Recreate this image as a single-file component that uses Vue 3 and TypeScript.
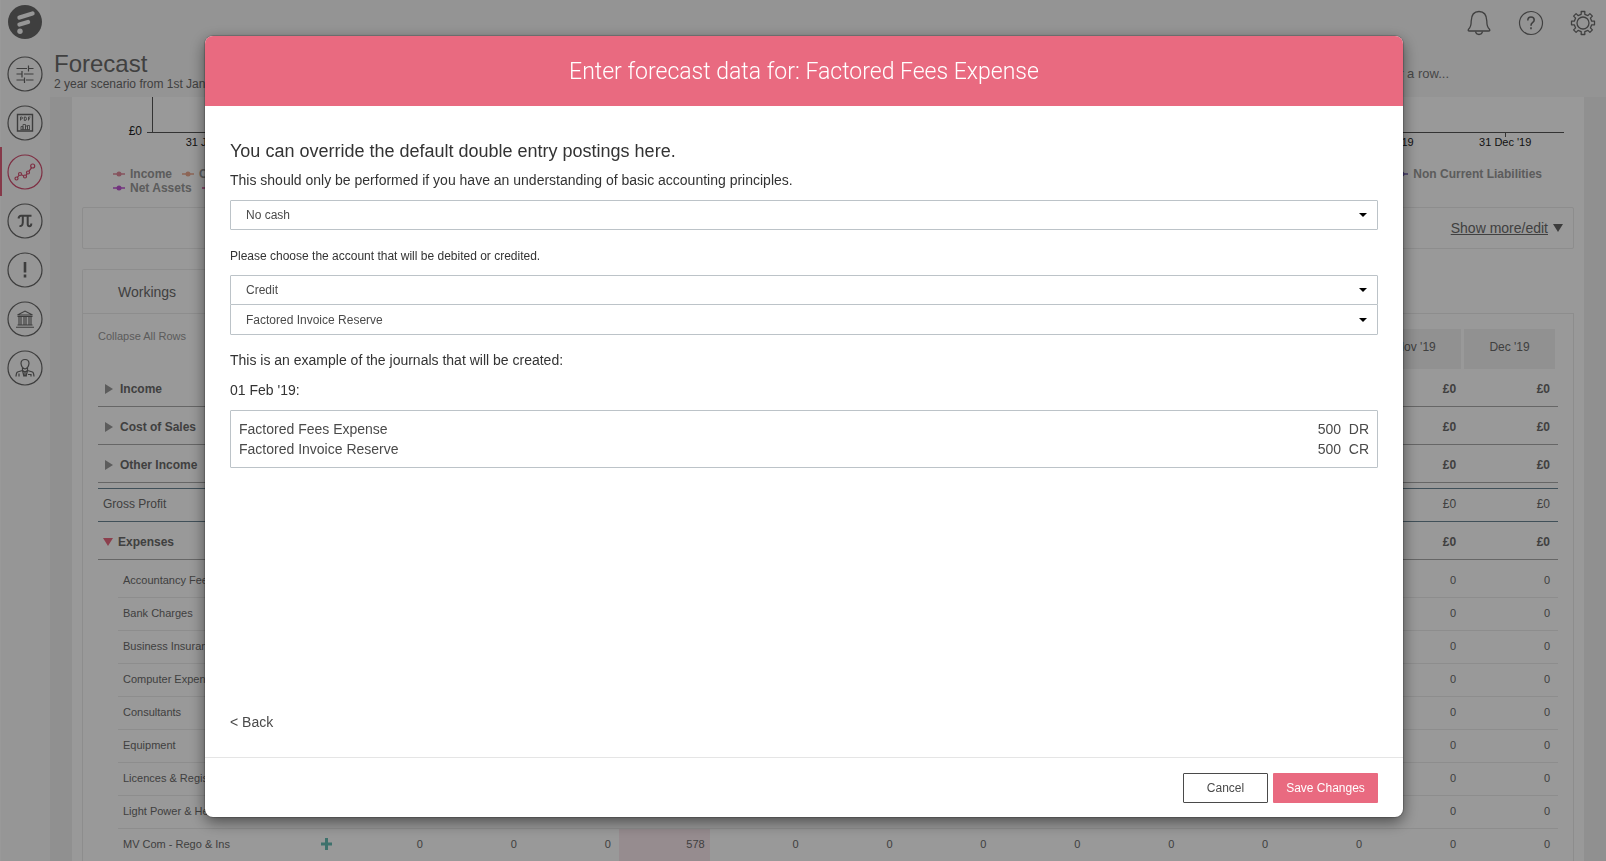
<script setup lang="ts">
import { ref } from 'vue'

interface Row {
  name: string
  kind: 'group' | 'total' | 'sub'
  open?: boolean
  first?: boolean
  add?: boolean
  values?: Record<number, string>
}

const months = ["Dec '18", "Jan '19", "Feb '19", "Mar '19", "Apr '19", "May '19", "Jun '19", "Jul '19", "Aug '19", "Sep '19", "Oct '19", "Nov '19", "Dec '19"]
const axis = ["31 Jan '19", "28 Feb '19", "31 Mar '19", "30 Apr '19", "31 May '19", "30 Jun '19", "31 Jul '19", "31 Aug '19", "30 Sep '19", "31 Oct '19", "30 Nov '19", "31 Dec '19"]
const rows: Row[] = [
  { name: 'Income', kind: 'group' },
  { name: 'Cost of Sales', kind: 'group' },
  { name: 'Other Income', kind: 'group' },
  { name: 'Gross Profit', kind: 'total' },
  { name: 'Expenses', kind: 'group', open: true },
  { name: 'Accountancy Fees', kind: 'sub', first: true },
  { name: 'Bank Charges', kind: 'sub' },
  { name: 'Business Insurance', kind: 'sub' },
  { name: 'Computer Expenses', kind: 'sub' },
  { name: 'Consultants', kind: 'sub' },
  { name: 'Equipment', kind: 'sub' },
  { name: 'Licences & Registrations', kind: 'sub' },
  { name: 'Light Power & Heat', kind: 'sub' },
  { name: 'MV Com - Rego & Ins', kind: 'sub', add: true, values: { 3: '578' } },
]
const legend = [
  [
    { name: 'Income', color: '#e08a9c' },
    { name: 'Cost of Sales', color: '#eba98f' },
    { name: 'Non Current Liabilities', color: '#7463b8' },
  ],
  [
    { name: 'Net Assets', color: '#bf55d3' },
    { name: 'Cash', color: '#d0509a' },
  ],
]
const nav = ['Scenarios', 'Reports', 'Forecast', 'Formulas', 'Alerts', 'Bank', 'Advisers']

const payment = ref('No cash')
const side = ref('Credit')
const account = ref('Factored Invoice Reserve')
const journal = [
  { name: 'Factored Fees Expense', amount: '500', side: 'DR' },
  { name: 'Factored Invoice Reserve', amount: '500', side: 'CR' },
]

function cell(row: Row, i: number): string {
  if (row.kind !== 'sub') return '£0'
  return row.values?.[i] ?? '0'
}
</script>

<template>
  <div class="app">
    <aside class="sidebar">
      <a href="#" class="logo" aria-label="Home">
        <svg width="34" height="34" viewBox="0 0 34 34">
          <circle cx="17" cy="17" r="17" fill="#6a6a6a" />
          <g stroke="#fafafa" stroke-width="4.4" stroke-linecap="round">
            <path d="M11.5 12.5 L24.5 8.5" />
            <path d="M11.5 19.5 L20 17" />
          </g>
          <circle cx="12" cy="26.3" r="2.7" fill="#fafafa" />
        </svg>
      </a>
      <nav>
        <a v-for="(item, i) in nav" :key="item" href="#" class="nav-item" :class="{ active: i === 2 }" :aria-label="item">
          <svg width="36" height="36" viewBox="0 0 36 36" fill="none" stroke="currentColor" stroke-width="1.2">
            <circle cx="18" cy="18" r="17" />
            <path v-if="i === 0" d="M9.5 12.5H20M22 12.5H26.5M21.5 9.5V15.5M9.5 18H14.5M17 18H26.5M15 15V21.5M9.5 24H17M19 24H26.5M17.5 21.5V27" stroke-width="1.2" />
            <template v-else-if="i === 1">
              <path d="M10.5 9.5H25.5V26H10.5Z" stroke-width="1.4" />
              <path d="M13.5 15.5V12H14.5Q15.5 12 15.5 13Q15.5 14 14.5 14H13.5M17.3 12V15.5H18Q19.5 15.5 19.5 13.7Q19.5 12 18 12ZM21.5 15.5V12H23.5M21.5 13.8H23" stroke-width="0.9" />
              <path d="M14 24.5V21.5H16V24.5M16 24.5V19.5H18.500V24.5M18.500 24.5V21H20.5V24.5M20.500 24.5V20.500H22.500V24.5M13.5 24.5H23" stroke-width="0.8" />
            </template>
            <g v-else-if="i === 2">
              <circle cx="9.5" cy="24.5" r="1.5" /><circle cx="13" cy="20" r="1.5" /><circle cx="18" cy="22.5" r="1.5" /><circle cx="21" cy="18.5" r="1.5" /><circle cx="25.7" cy="12" r="2" />
              <path d="M10.5 23.2L12 21.4M14.4 20.7L16.6 21.8M19 21.3L20 19.8M22 17.2L24.5 13.8" />
            </g>
            <path v-else-if="i === 3" d="M11.5 15.5Q12 12.700 14 12.700H24.5M15.800 13V19.500Q15.500 23.500 12.500 23M20.700 13V21Q20.800 23.300 22.500 23.300Q24.300 23.300 24.300 20.500" stroke-width="2" />
            <path v-else-if="i === 4" d="M18 10V20.5M18 22.500V25.5" stroke-width="2.6" />
            <path v-else-if="i === 5" d="M10.5 14L18 10L25.5 14ZM10.5 15.500H25.5M12 16V23.500M14 16V23.500M17 16V23.500M19 16V23.500M22 16V23.500M24 16V23.500M10.500 24H25.500M9 26.300H27" stroke-width="1.1" />
            <path v-else d="M14 13.500Q14 9.500 18 9.500Q22 9.500 22 13.500Q21.500 18 18 19Q14.500 18 14 13.500ZM15.500 18V20.500L18 22L20.500 20.500V18M15.500 20.500L10.500 22Q9.300 22.500 9 26.500M20.500 20.500L25.500 22Q26.700 22.500 27 26.500M12 26.500V23.500M24 26.500V24M15.500 20.500L17 26.500M20.500 20.500L19 26.500M18 22V26.500M21 24.500H24" stroke-width="1.2" />
          </svg>
        </a>
      </nav>
    </aside>

    <div class="page">
      <header class="top">
        <div class="heading">
          <h1>Forecast</h1>
          <p>2 year scenario from 1st Jan '18</p>
        </div>
        <input class="search" type="text" placeholder="Search for a row..." aria-label="Search for a row" />
        <div class="tools">
          <button type="button" aria-label="Notifications">
            <svg width="26" height="26" viewBox="0 0 26 26" fill="none" stroke="currentColor" stroke-width="1.3">
              <path d="M3.500 21Q1.500 21 2.500 19.300Q5.200 17 5.200 11Q5.500 1.500 13 1.500Q20.500 1.500 20.800 11Q20.800 17 23.500 19.300Q24.500 21 22.500 21Z" />
              <path d="M9.500 21.500Q10 24.500 13 24.500Q16 24.500 16.500 21.500" />
            </svg>
          </button>
          <button type="button" aria-label="Help">
            <svg width="26" height="26" viewBox="0 0 26 26" fill="none" stroke="currentColor" stroke-width="1.2">
              <circle cx="13" cy="13" r="11.5" />
              <path d="M9.800 10.500Q9.800 7 13 7Q16.200 7 16.200 10Q16.200 11.500 14.500 12.700Q13 13.800 13 15.800M13 17.300V19.300" stroke-width="1.6" />
            </svg>
          </button>
          <button type="button" aria-label="Settings">
            <svg width="26" height="26" viewBox="0 0 26 26" fill="none" stroke="currentColor" stroke-width="1.3" stroke-linejoin="round">
              <circle cx="13" cy="13" r="6" />
              <path d="M11.200 4.300V1.500H14.800V4.300L17.900 5.600L19.900 3.600L22.400 6.100L20.400 8.100L21.700 11.200H24.500V14.800H21.700L20.400 17.900L22.400 19.900L19.900 22.400L17.900 20.400L14.800 21.700V24.500H11.200V21.700L8.100 20.400L6.100 22.400L3.600 19.900L5.600 17.900L4.300 14.800H1.500V11.200H4.300L5.600 8.100L3.600 6.100L6.100 3.600L8.100 5.600Z" />
            </svg>
          </button>
        </div>
      </header>

      <main class="main">
        <section class="chart">
          <div class="plot"><span class="zero">£0</span><div class="area"></div></div>
          <div class="axis"><span v-for="a in axis" :key="a">{{ a }}</span></div>
          <div class="legend">
            <div v-for="(line, i) in legend" :key="i" class="legend-row">
              <span v-for="l in line" :key="l.name" class="legend-item">
                <svg width="12" height="6" viewBox="0 0 12 6"><path d="M0 3H12" :stroke="l.color" stroke-width="1.5" /><circle cx="6" cy="3" r="2.5" :fill="l.color" /></svg>{{ l.name }}
              </span>
            </div>
          </div>
        </section>

        <section class="summary">
          <a href="#">Show more/edit</a>
          <svg width="10" height="8" viewBox="0 0 10 8"><path d="M0 0H10L5 8Z" fill="#646464" /></svg>
        </section>

        <div class="tab-line"><button type="button" class="tab">Workings</button></div>
        <section class="workings">
          <table class="grid">
            <colgroup><col class="name-col" /><col v-for="m in months" :key="m" /></colgroup>
            <thead>
              <tr>
                <th class="collapse"><button type="button">Collapse All Rows</button></th>
                <th v-for="m in months" :key="m" class="month-head"><span>{{ m }}</span></th>
              </tr>
            </thead>
            <tbody v-for="row in rows" :key="row.name" :class="[row.kind, { first: row.first }]">
              <tr v-if="row.kind === 'total'" class="spacer"><td colspan="14"></td></tr>
              <tr class="line">
                <th scope="row">
                  <div class="label">
                    <svg v-if="row.kind === 'group' && !row.open" class="arrow" width="8" height="10" viewBox="0 0 8 10"><path d="M0 0L8 5L0 10Z" fill="#999" /></svg>
                    <svg v-if="row.open" width="10" height="8" viewBox="0 0 10 8"><path d="M0 0H10L5 8Z" fill="#e96a80" /></svg>
                    <span>{{ row.name }}</span>
                    <svg v-if="row.add" class="plus" width="11" height="12" viewBox="0 0 11 12"><path d="M5.500 0V12M0 6H11" stroke="#68bdb5" stroke-width="3" /></svg>
                  </div>
                </th>
                <td v-for="(m, i) in months" :key="m" :class="{ hot: row.values && row.values[i] }">{{ cell(row, i) }}</td>
              </tr>
            </tbody>
          </table>
        </section>
      </main>
    </div>

    <div class="overlay">
      <div class="modal" role="dialog" aria-modal="true" aria-labelledby="modal-title">
        <header class="modal-head"><h2 id="modal-title">Enter forecast data for: Factored Fees Expense</h2></header>
        <div class="modal-body">
          <h3>You can override the default double entry postings here.</h3>
          <p class="hint">This should only be performed if you have an understanding of basic accounting principles.</p>
          <div class="select">
            <select v-model="payment" aria-label="Cash posting"><option>No cash</option><option>Cash</option></select>
            <svg width="8" height="4" viewBox="0 0 8 4"><path d="M0 0H8L4 4Z" /></svg>
          </div>
          <p id="account-note" class="note">Please choose the account that will be debited or credited.</p>
          <div class="select">
            <select v-model="side" aria-labelledby="account-note"><option>Credit</option><option>Debit</option></select>
            <svg width="8" height="4" viewBox="0 0 8 4"><path d="M0 0H8L4 4Z" /></svg>
          </div>
          <div class="select joined">
            <select v-model="account" aria-labelledby="account-note"><option>Factored Invoice Reserve</option></select>
            <svg width="8" height="4" viewBox="0 0 8 4"><path d="M0 0H8L4 4Z" /></svg>
          </div>
          <p class="example">This is an example of the journals that will be created:</p>
          <p class="date">01 Feb '19:</p>
          <div class="journal">
            <table>
              <tbody>
                <tr v-for="j in journal" :key="j.name"><td>{{ j.name }}</td><td class="amount">{{ j.amount }}</td><td class="side">{{ j.side }}</td></tr>
              </tbody>
            </table>
          </div>
          <a href="#" class="back">&lt; Back</a>
        </div>
        <footer class="modal-foot">
          <button type="button" class="btn cancel">Cancel</button>
          <button type="button" class="btn save">Save Changes</button>
        </footer>
      </div>
    </div>
  </div>
</template>

<style>
body { margin: 0; overflow: hidden; }
</style>

<style scoped>
* { box-sizing: border-box; }
.app { display: flex; height: 100vh; overflow: hidden; font-family: "Liberation Sans", Arial, sans-serif; color: #6b6b6b; background: #fafafa; }
h1, h2, h3, p { margin: 0; font-weight: 400; }
button { font: inherit; color: inherit; background: none; border: 0; padding: 0; }
a { color: inherit; }
svg { display: block; flex: none; }

.sidebar { width: 50px; flex: none; background: #fafafa; box-shadow: inset 1px 0 #fff; }
.logo { display: block; padding: 5px 0 0 8px; height: 49px; }
.nav-item { display: flex; align-items: center; height: 49px; padding-left: 7px; color: #666; }
.nav-item.active { color: #d24e70; border-left: 2px solid #e0607a; padding-left: 5px; }

.page { flex: 1; min-width: 0; display: flex; flex-direction: column; background: #f0f0f0; }
.top { height: 97px; flex: none; display: flex; background: #f7f7f7; padding-left: 4px; }
.heading { flex: 1; padding-top: 50px; }
.heading h1 { font-size: 24px; line-height: 27px; }
.heading p { font-size: 12px; line-height: 14px; }
.search { align-self: flex-start; margin: 63px 17px 0 0; width: 200px; height: 20px; border: 0; padding: 0; background: transparent; font: 13px "Liberation Sans", Arial, sans-serif; text-align: right; }
.search::placeholder { color: #777; opacity: 1; }
.tools { display: flex; gap: 26px; padding: 10px 10px 0 0; height: 36px; }

.main { flex: none; margin: 0 22px; background: #fff; padding: 0 10px; }
.chart { height: 110px; }
.plot { display: flex; height: 36px; padding-right: 10px; }
.zero { width: 60px; padding-top: 27px; text-align: right; font-size: 12px; line-height: 14px; color: #222; }
.area { flex: 1; margin-left: 10px; border-left: 1px solid #555; border-bottom: 1px solid #555; position: relative; }
.area::before { content: ""; position: absolute; left: -6px; bottom: -1px; width: 5px; height: 1px; background: #555; }
.axis { display: flex; padding: 0 10px 0 70px; }
.axis span { flex: 1; text-align: center; font-size: 11px; line-height: 14px; color: #222; padding-top: 2px; background: linear-gradient(#555, #555) center top / 1px 4px no-repeat; }
.legend { padding: 18px 32px 0 31px; }
.legend-row { display: flex; gap: 10px; }
.legend-row:first-child .legend-item:last-child { margin-left: auto; }
.legend-item { display: flex; align-items: center; gap: 5px; font-size: 12px; line-height: 14px; font-weight: 700; color: #999; }

.summary { height: 42px; border: 1px solid #ebebeb; border-radius: 2px; display: flex; align-items: center; justify-content: flex-end; gap: 5px; padding-right: 10px; font-size: 14px; }
.tab-line { padding-top: 20px; }
.tab { width: 160px; height: 45px; border: 1px solid #ebebeb; border-bottom: 0; border-radius: 2px 0 0; padding-left: 35px; text-align: left; font-size: 14px; display: block; }
.workings { border: 1px solid #ebebeb; padding: 15px 15px 0; margin-top: -1px; }
.grid { width: 100%; border-collapse: separate; border-spacing: 0; table-layout: fixed; }
.name-col { width: 239px; }
.grid th, .grid td { padding: 0; }
.collapse { text-align: left; vertical-align: top; font-weight: 400; font-size: 11px; color: #999; }
.collapse button { line-height: 14px; }
.month-head { font-size: 12px; font-weight: 400; height: 40px; }
.month-head span { display: block; margin-right: 3px; background: #f2f2f2; line-height: 36px; height: 40px; }
.grid .line td { text-align: right; padding-right: 8px; }
.label { display: flex; align-items: center; }
.group .line > * { height: 38px; border-bottom: 1px solid #aaa; font-size: 12px; font-weight: 700; }
.grid .group th, .grid .group td { padding-top: 2px; }
.group .label { padding-left: 5px; gap: 5px; }
.label .arrow { margin: 0 2px; }
.spacer td { height: 5px; }
.total .line > * { height: 34px; border-bottom: 1px solid #6b8594; border-top: 1px solid #6b8594; font-size: 12px; font-weight: 400; }
.grid .total .line > * { padding-bottom: 2px; }
.total .label { padding-left: 5px; }
.sub .line > * { height: 33px; font-size: 11px; font-weight: 400; }
.sub td, .sub .label { border-bottom: 1px solid #ececec; }
.sub .label { margin-left: 20px; padding: 0 0 2px 5px; height: 33px; }
.grid .sub td { padding-bottom: 2px; }
.sub.first .line > * { height: 38px; }
.sub.first .label { height: 38px; padding-top: 4px; }
.grid .sub.first td { padding-top: 4px; }
.plus { margin-left: auto; margin-right: 5px; }
.grid .line .hot { background: #fae9ee padding-box; border-right: 3px solid transparent; padding-right: 5px; }

.overlay { position: fixed; inset: 0; background: rgba(0, 0, 0, .4); padding: 36px 203px 44px 205px; display: flex; }
.modal { flex: 1; display: flex; flex-direction: column; background: #fff; border-radius: 8px; overflow: hidden; box-shadow: 0 0 1px 1px rgba(0, 0, 0, .2), 0 5px 15px rgba(0, 0, 0, .5); color: #333; }
.modal-head { height: 70px; background: #e96a80; color: #fff; display: flex; align-items: center; justify-content: center; }
.modal-head h2 { font: 300 23px "Roboto", sans-serif; }
.modal-body { flex: 1; padding: 34px 25px 0; display: flex; flex-direction: column; }
h3 { font-size: 18px; line-height: 22px; }
.hint { margin-top: 8px; font-size: 14px; line-height: 20px; }
.select { display: flex; align-items: center; position: relative; margin-top: 10px; }
.select select { appearance: none; width: 100%; height: 30px; border: 1px solid #bcc3c8; border-radius: 1px; background: #fff; color: #4a4a4a; font: 12px "Liberation Sans", Arial, sans-serif; padding: 0 30px 0 15px; }
.select svg { position: absolute; right: 11px; }
.note { margin-top: 16px; font-size: 12px; line-height: 20px; }
.note + .select { margin-top: 9px; }
.select.joined { margin-top: -1px; }
.select.joined select { height: 31px; }
.example { margin-top: 15px; font-size: 14px; line-height: 20px; }
.date { margin-top: 10px; font-size: 14px; line-height: 20px; }
.journal { margin-top: 10px; border: 1px solid #bcc3c8; border-radius: 1px; padding: 8px; color: #4a4a4a; }
.journal table { width: 100%; border-spacing: 0; font-size: 14px; line-height: 20px; }
.journal td { padding: 0; }
.journal .amount { text-align: right; }
.journal .side { width: 28px; text-align: right; }
.back { margin-top: auto; margin-bottom: 25px; align-self: flex-start; font-size: 14px; line-height: 20px; text-decoration: none; color: #4a4a4a; }
.modal-foot { height: 60px; border-top: 1px solid #e5e5e5; display: flex; align-items: center; justify-content: flex-end; gap: 5px; padding-right: 25px; }
.btn { height: 30px; border-radius: 1px; font-size: 12px; }
.cancel { width: 85px; border: 1px solid #4a4a4a; color: #4a4a4a; }
.save { width: 105px; background: #e96a80; color: #fff; }
</style>
